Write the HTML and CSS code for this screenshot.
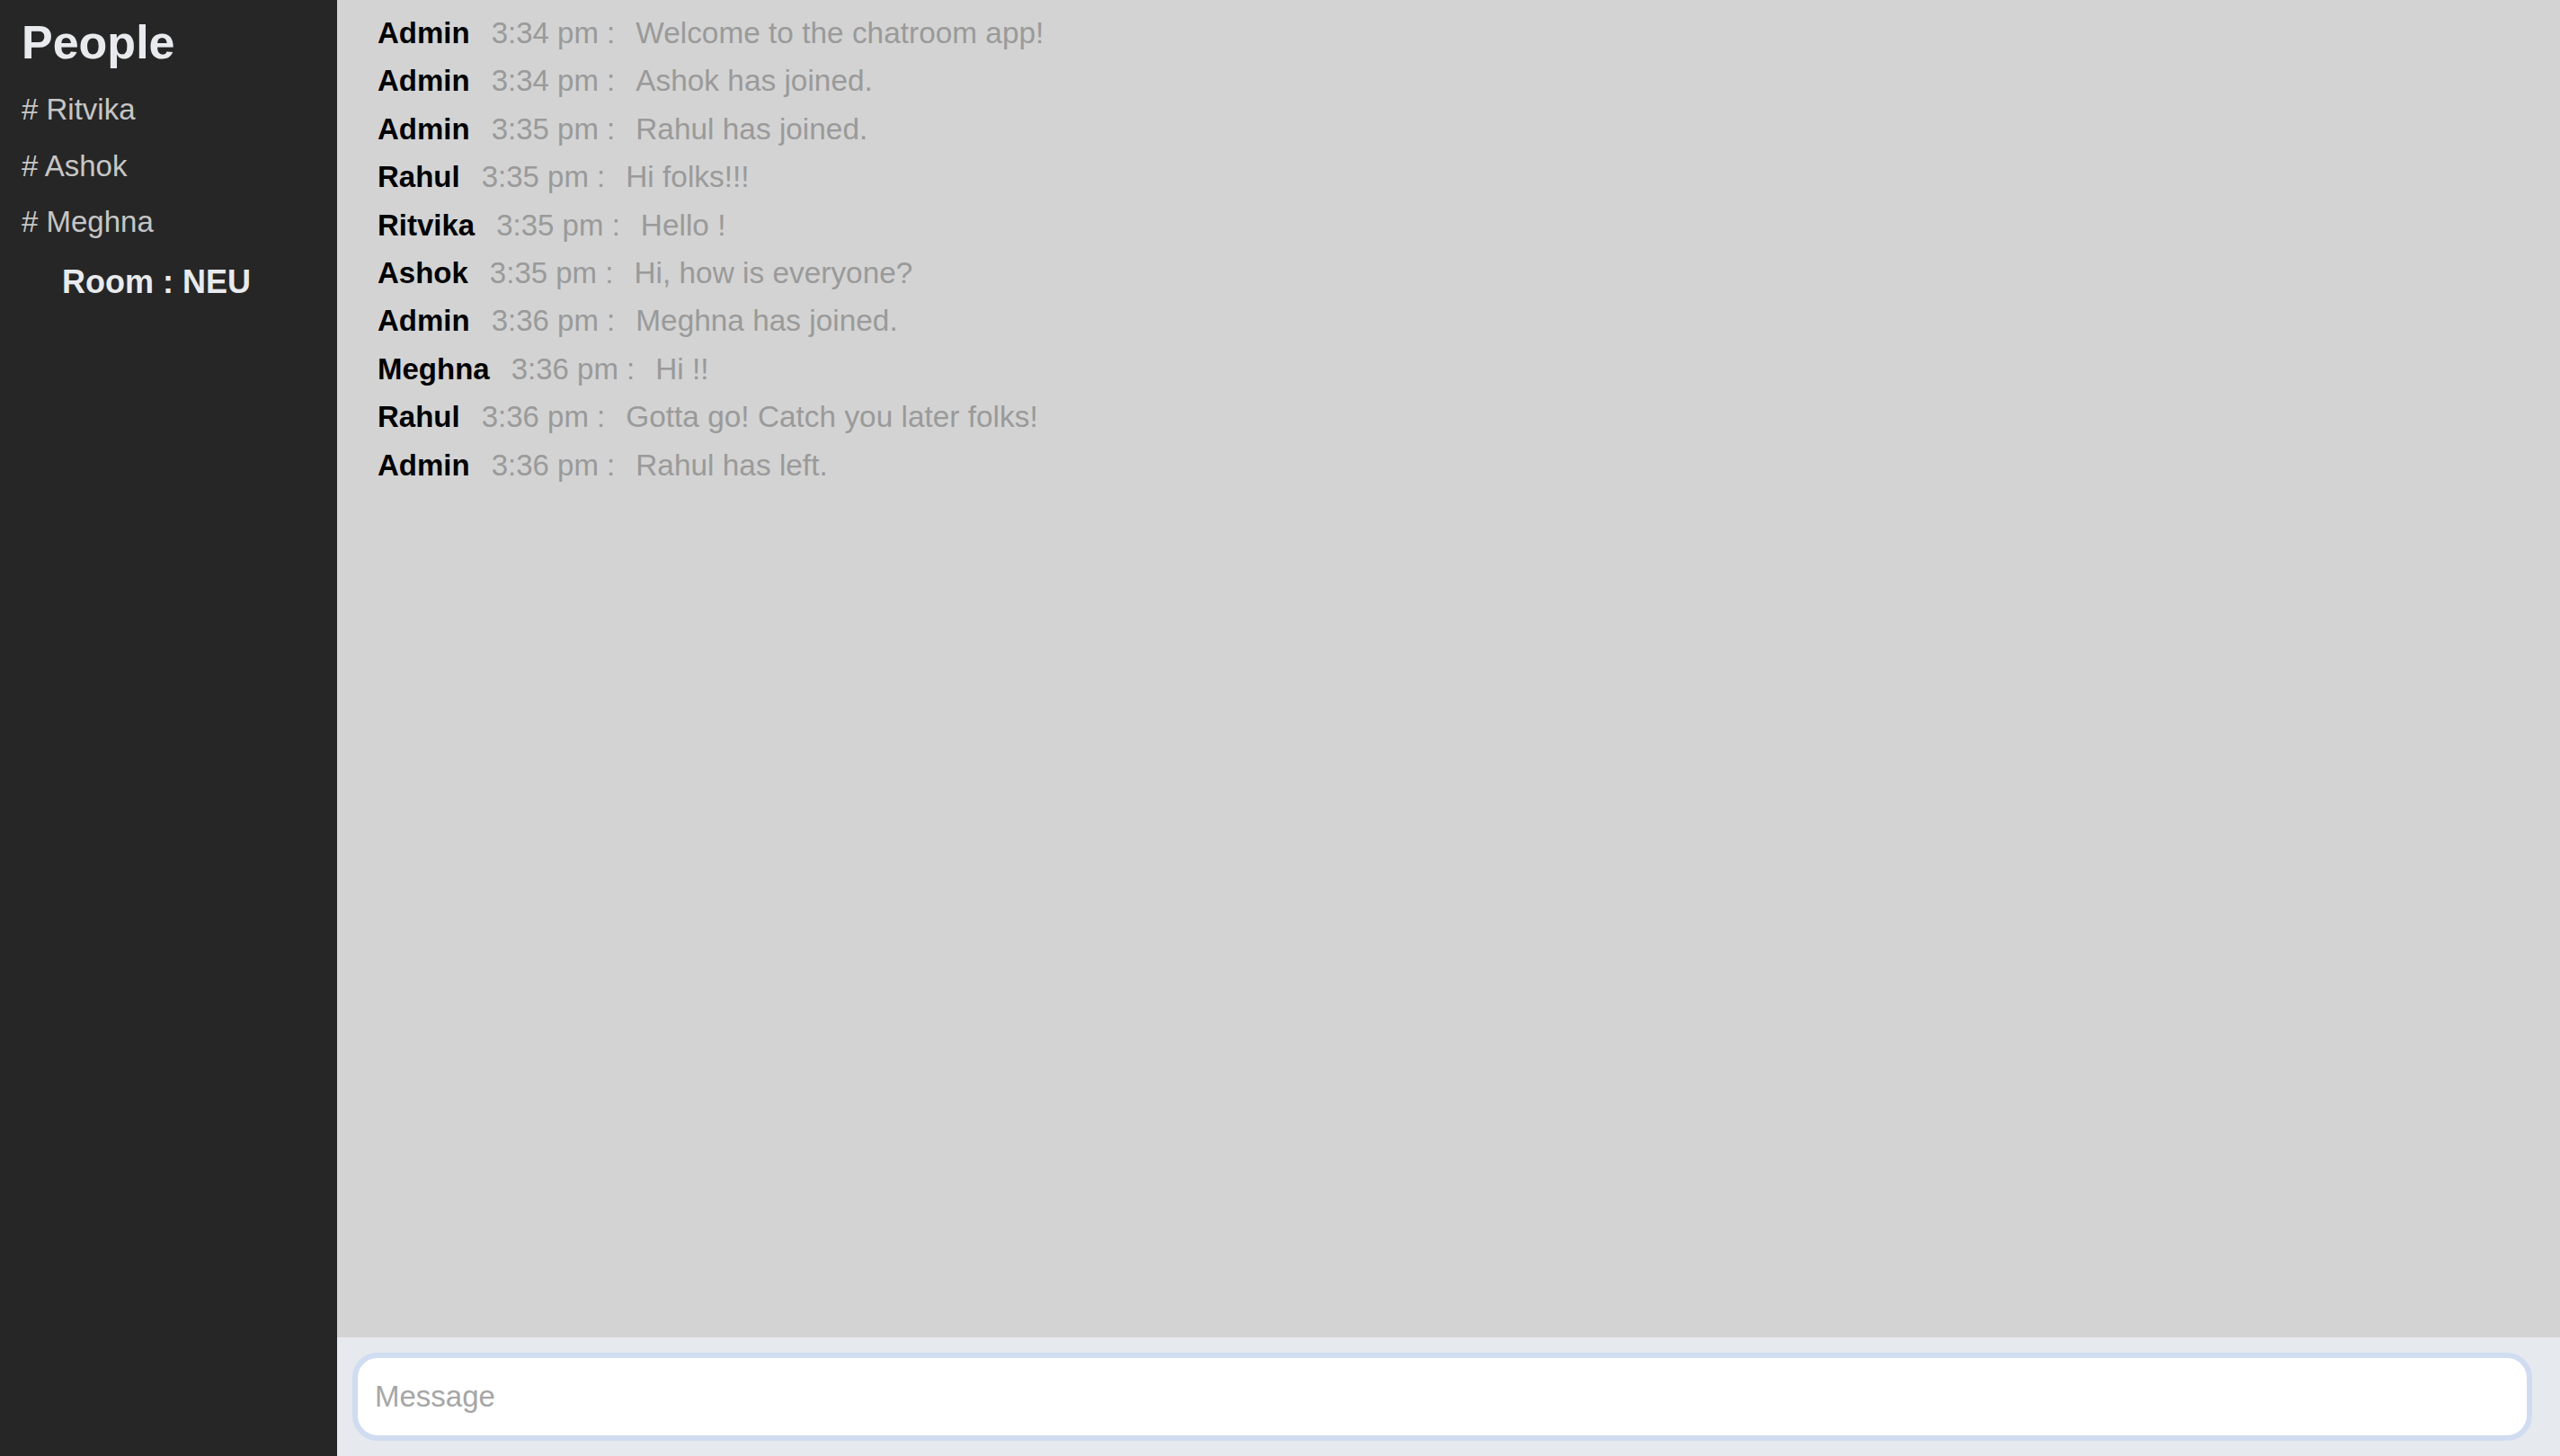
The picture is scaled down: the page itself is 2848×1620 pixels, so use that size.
FILE: index.html
```html
<!DOCTYPE html>
<html lang="en">
<head>
<meta charset="utf-8">
<title>Chatroom</title>
<link rel="stylesheet" href="styles.css">
</head>
<body>
<div class="app">
  <aside class="sidebar">
    <h2 class="sidebar-title">People</h2>
    <ul class="people">
      <li class="person"># Ritvika</li>
      <li class="person"># Ashok</li>
      <li class="person"># Meghna</li>
    </ul>
    <h3 class="room">Room : NEU</h3>
  </aside>
  <main class="chat">
    <div class="messages">
      <div class="msg"><span class="msg-name">Admin</span><span class="msg-time">3:34 pm :</span><span class="msg-text">Welcome to the chatroom app!</span></div>
      <div class="msg"><span class="msg-name">Admin</span><span class="msg-time">3:34 pm :</span><span class="msg-text">Ashok has joined.</span></div>
      <div class="msg"><span class="msg-name">Admin</span><span class="msg-time">3:35 pm :</span><span class="msg-text">Rahul has joined.</span></div>
      <div class="msg"><span class="msg-name">Rahul</span><span class="msg-time">3:35 pm :</span><span class="msg-text">Hi folks!!!</span></div>
      <div class="msg"><span class="msg-name">Ritvika</span><span class="msg-time">3:35 pm :</span><span class="msg-text">Hello !</span></div>
      <div class="msg"><span class="msg-name">Ashok</span><span class="msg-time">3:35 pm :</span><span class="msg-text">Hi, how is everyone?</span></div>
      <div class="msg"><span class="msg-name">Admin</span><span class="msg-time">3:36 pm :</span><span class="msg-text">Meghna has joined.</span></div>
      <div class="msg"><span class="msg-name">Meghna</span><span class="msg-time">3:36 pm :</span><span class="msg-text">Hi !!</span></div>
      <div class="msg"><span class="msg-name">Rahul</span><span class="msg-time">3:36 pm :</span><span class="msg-text">Gotta go! Catch you later folks!</span></div>
      <div class="msg"><span class="msg-name">Admin</span><span class="msg-time">3:36 pm :</span><span class="msg-text">Rahul has left.</span></div>
    </div>
    <form class="composer">
      <input class="composer-input" type="text" placeholder="Message">
    </form>
  </main>
</div>
</body>
</html>
```
FILE: styles.css
```css
html, body {
  margin: 0;
  padding: 0;
  height: 100%;
}

body {
  font-family: "Liberation Sans", Arial, Helvetica, sans-serif;
  background: #d3d3d3;
}

.app {
  display: grid;
  grid-template-columns: 375px 1fr;
  height: 100vh;
}

.sidebar {
  background: #262626;
  padding: 17px 0 0 24px;
  box-sizing: border-box;
}

.sidebar-title {
  margin: 0;
  font-size: 52px;
  line-height: 60px;
  font-weight: 700;
  color: #e9eaee;
}

.people {
  list-style: none;
  margin: 14px 0 0 0;
  padding: 0;
}

.person {
  font-size: 33px;
  line-height: 62.5px;
  color: #c6c6c6;
}

.room {
  margin: 4px 0 0 0;
  padding-left: 45px;
  font-size: 36px;
  line-height: 62.5px;
  font-weight: 700;
  color: #e9eaee;
}

.chat {
  display: flex;
  flex-direction: column;
  min-width: 0;
}

.messages {
  flex: 1;
  background: #d3d3d3;
  padding: 10px 0 0 45px;
}

.msg {
  height: 53.4px;
  line-height: 53.4px;
  white-space: nowrap;
}

.msg-name {
  font-size: 33px;
  font-weight: 700;
  color: #000;
  margin-right: 24px;
}

.msg-time {
  font-size: 33px;
  color: #9a9a9a;
  margin-right: 23px;
}

.msg-text {
  font-size: 33.4px;
  color: #9a9a9a;
}

.composer {
  margin: 0;
  height: 132px;
  box-sizing: border-box;
  padding: 17px 31px 17px 17px;
  background: #e6e9ee;
  display: flex;
}

.composer-input {
  flex: 1;
  height: 98px;
  box-sizing: border-box;
  border: 6px solid #d0dcf0;
  border-radius: 28px;
  background: #fff;
  padding: 0 19px;
  font-family: "Liberation Sans", Arial, Helvetica, sans-serif;
  font-size: 33px;
  color: #333;
  outline: none;
}

.composer-input::placeholder {
  color: #a6a6a6;
}
```
